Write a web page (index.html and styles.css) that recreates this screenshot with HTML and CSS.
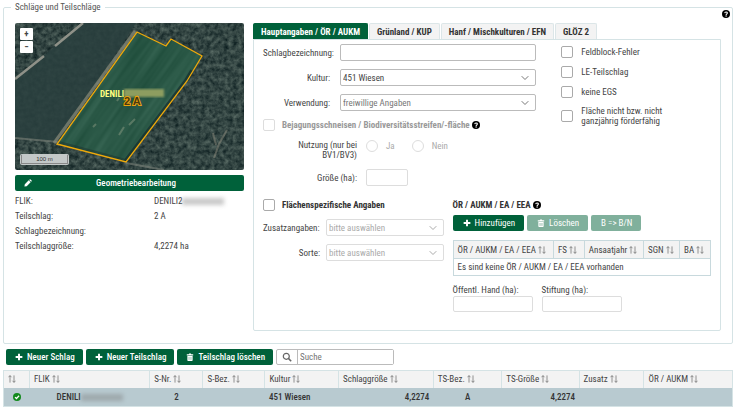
FILE: index.html
```
<!DOCTYPE html>
<html lang="de">
<head>
    <meta charset="UTF-8">
    <meta name="viewport" content="width=device-width, initial-scale=1">
    <title>Schläge und Teilschläge</title>
    <link rel="stylesheet" href="styles.css">
</head>
<body>

<!-- shared icons -->
<svg class="sprite" aria-hidden="true">
    <symbol id="plus" viewBox="0 0 10 10"><path d="M3.8 .8h2.4v3h3v2.4h-3v3H3.8v-3h-3V3.8h3z" fill="currentColor"/></symbol>
    <symbol id="trash" viewBox="0 0 10 10"><path d="M1 1.6h2.4l.5-1h2.2l.5 1H9V3H1zM1.7 3.6h6.6V9a.9.9 0 0 1-.9.9H2.6A.9.9 0 0 1 1.7 9z" fill="currentColor"/><path d="M3.8 5v3.6M6.2 5v3.6" stroke="#00613a" stroke-width=".5"/></symbol>
    <symbol id="pencil" viewBox="0 0 10 10"><path d="M.5 9.5L1 6.6l4.9-4.9 2.4 2.4-4.9 4.9zM6.5 1.1l.6-.6a.8.8 0 0 1 1.1 0l1.3 1.3a.8.8 0 0 1 0 1.1l-.6.6z" fill="currentColor"/></symbol>
    <symbol id="help" viewBox="0 0 10 10"><circle cx="5" cy="5" r="5" fill="#000"/><path d="M3.4 3.9C3.5 2.8 4.2 2.4 5 2.4c1 0 1.7.6 1.7 1.4 0 1.2-1.6 1.1-1.6 2.3" fill="none" stroke="#fff" stroke-width="1.3"/><circle cx="5.1" cy="7.6" r=".9" fill="#fff"/></symbol>
    <symbol id="sort" viewBox="0 0 10 10"><path d="M2.5 9.5V.8M.6 2.8L2.5.8l1.9 2M7.5.5v8.7M5.6 7.2l1.9 2 1.9-2" fill="none" stroke="#777" stroke-width="1"/></symbol>
    <symbol id="down" viewBox="0 0 10 10"><path d="M1.7 3.2L5 6.5l3.3-3.3" fill="none" stroke="currentColor" stroke-width="1"/></symbol>
    <symbol id="search" viewBox="0 0 10 10"><circle cx="4.3" cy="4.3" r="3" fill="none" stroke="#666" stroke-width="1.2"/><path d="M6.4 6.4l2.8 2.8" stroke="#666" stroke-width="1.5"/></symbol>
    <symbol id="check" viewBox="0 0 10 10"><circle cx="5" cy="5" r="5" fill="#128a1c"/><path d="M2.5 5.1l1.8 1.8 3.3-3.5" fill="none" stroke="#fff" stroke-width="1.5"/></symbol>
</svg>

<fieldset class="frame">
    <legend>Schläge und Teilschläge</legend>
    <svg class="icon frame-help"><use href="#help"/></svg>

    <div class="columns">
        <section class="left">
            <div class="map">
                <svg viewBox="0 0 229 147" preserveAspectRatio="xMidYMid slice">
                    <defs>
                        <filter id="trees" x="0" y="0" width="1" height="1" color-interpolation-filters="sRGB">
                            <feTurbulence type="fractalNoise" baseFrequency=".22" numOctaves="3" seed="8"/>
                            <feColorMatrix values=".38 0 0 0 .01  .38 0 0 0 .08  .34 0 0 0 .09  0 0 0 0 1"/>
                        </filter>
                        <filter id="crop" x="0" y="0" width="1" height="1" color-interpolation-filters="sRGB">
                            <feTurbulence type="fractalNoise" baseFrequency=".16 .01" numOctaves="2" seed="3"/>
                            <feColorMatrix values=".15 0 0 0 .09  .15 0 0 0 .27  .15 0 0 0 .2  0 0 0 0 1"/>
                        </filter>
                        <filter id="soft"><feGaussianBlur stdDeviation="1"/></filter>
                        <clipPath id="field"><path d="M122 9l29 14 5-7 31 17-15 25-61 81-69-18z"/></clipPath>
                    </defs>
                    <rect width="229" height="147" filter="url(#trees)"/>
                    <path d="M0 57L68 0h53L43 118 0 115z" fill="#2a403f" opacity=".88"/>
                    <path d="M0 56L29 33M40 23L68 0" stroke="#8f9188" stroke-width="2.5" fill="none"/>
                    <path d="M0 115l43 4M111 140l38 7" stroke="#7c837a" stroke-width="2" opacity=".6"/>
                    <path d="M212 107l-8 14-5 14M198 110l3 12" stroke="#8c8a7c" stroke-width="2" fill="none" opacity=".5"/>
                    <path d="M120 8L39 120" stroke="#8a8c7b" stroke-width="3" opacity=".7"/>
                    <g clip-path="url(#field)">
                        <rect x="-20" y="-80" width="270" height="320" filter="url(#crop)" transform="rotate(35 115 75)"/>
                        <path d="M178 48l-6 10-61 81" stroke="#142c2c" stroke-width="6" fill="none" opacity=".7"/>
                        <path d="M42 119l67 18" stroke="#1d3430" stroke-width="3" opacity=".5"/>
                        <path d="M104 112l5-8M114 102l6-6M102 78l2-3M78 104l3-3" stroke="#a1aa91" stroke-width="2" opacity=".4"/>
                    </g>
                    <path d="M122 9l29 14 5-7 31 17-15 25-61 81-69-18z" fill="none" stroke="#eea90b" stroke-width="1.3"/>
                    <text x="85" y="74" class="map-flik">DENILI</text>
                    <rect x="109" y="66" width="40" height="8" fill="#8d9d61" filter="url(#soft)"/>
                    <text x="109" y="82" class="map-part">2 A</text>
                </svg>
                <div class="zoom">
                    <button type="button" aria-label="Vergrößern">+</button>
                    <button type="button" aria-label="Verkleinern">−</button>
                </div>
                <div class="scale"><span>100 m</span></div>
            </div>
            <button type="button" class="btn geo"><svg class="icon"><use href="#pencil"/></svg><span>Geometriebearbeitung</span></button>
            <dl class="info">
                <dt>FLIK:</dt><dd>DENILI2<span class="hidden-no"></span></dd>
                <dt>Teilschlag:</dt><dd>2 A</dd>
                <dt>Schlagbezeichnung:</dt><dd></dd>
                <dt>Teilschlaggröße:</dt><dd>4,2274 ha</dd>
            </dl>
        </section>

        <section class="right">
            <nav class="tabs">
                <button type="button" class="active">Hauptangaben / ÖR / AUKM</button>
                <button type="button">Grünland / KUP</button>
                <button type="button">Hanf / Mischkulturen / EFN</button>
                <button type="button">GLÖZ 2</button>
            </nav>
            <div class="panel">
                <div class="upper">
                    <div class="main-data">
                        <div class="fields">
                            <label for="bez" class="wide">Schlagbezeichnung:</label>
                            <input type="text" id="bez">
                            <label for="kultur">Kultur:</label>
                            <div class="select"><select id="kultur"><option>451 Wiesen</option></select><svg class="icon"><use href="#down"/></svg></div>
                            <label for="verw">Verwendung:</label>
                            <div class="select grey"><select id="verw"><option>freiwillige Angaben</option></select><svg class="icon"><use href="#down"/></svg></div>
                        </div>
                        <div class="head-row off">
                            <label><input type="checkbox" disabled><span>Bejagungsschneisen / Biodiversitätsstreifen/-fläche</span></label>
                            <svg class="icon"><use href="#help"/></svg>
                        </div>
                        <div class="usage">
                            <span id="nutzung" class="caption">Nutzung (nur bei<br>BV1/BV3)</span>
                            <div class="radios" role="radiogroup" aria-labelledby="nutzung">
                                <label><input type="radio" name="nutzung" disabled>Ja</label>
                                <label><input type="radio" name="nutzung" disabled>Nein</label>
                            </div>
                            <label for="groesse" class="caption">Größe (ha):</label>
                            <input type="text" id="groesse" disabled>
                        </div>
                    </div>
                    <div class="flags">
                        <label><input type="checkbox"><span>Feldblock-Fehler</span></label>
                        <label><input type="checkbox"><span>LE-Teilschlag</span></label>
                        <label><input type="checkbox"><span>keine EGS</span></label>
                        <label><input type="checkbox"><span>Fläche nicht bzw. nicht<br>ganzjährig förderfähig</span></label>
                    </div>
                </div>

                <div class="lower">
                    <div class="specific">
                        <div class="head-row"><label><input type="checkbox"><span>Flächenspezifische Angaben</span></label></div>
                        <div class="fields">
                            <label for="zusatz" class="wide">Zusatzangaben:</label>
                            <div class="select off"><select id="zusatz" disabled><option>bitte auswählen</option></select><svg class="icon"><use href="#down"/></svg></div>
                            <label for="sorte">Sorte:</label>
                            <div class="select off"><select id="sorte" disabled><option>bitte auswählen</option></select><svg class="icon"><use href="#down"/></svg></div>
                        </div>
                    </div>
                    <div class="measures">
                        <h2>ÖR / AUKM / EA / EEA <svg class="icon"><use href="#help"/></svg></h2>
                        <div class="buttons">
                            <button type="button" class="btn"><svg class="icon"><use href="#plus"/></svg>Hinzufügen</button>
                            <button type="button" class="btn" disabled><svg class="icon"><use href="#trash"/></svg>Löschen</button>
                            <button type="button" class="btn" disabled>B =&gt; B/N</button>
                        </div>
                        <table class="small-table">
                            <colgroup><col class="m-name"><col class="m-fs"><col class="m-year"><col class="m-sgn"><col class="m-ba"></colgroup>
                            <thead><tr>
                                <th>ÖR / AUKM / EA / EEA <svg class="icon"><use href="#sort"/></svg></th>
                                <th>FS <svg class="icon"><use href="#sort"/></svg></th>
                                <th>Ansaatjahr <svg class="icon"><use href="#sort"/></svg></th>
                                <th>SGN <svg class="icon"><use href="#sort"/></svg></th>
                                <th>BA <svg class="icon"><use href="#sort"/></svg></th>
                            </tr></thead>
                            <tbody><tr><td colspan="5">Es sind keine ÖR / AUKM / EA / EEA vorhanden</td></tr></tbody>
                        </table>
                        <div class="areas">
                            <label>Öffentl. Hand (ha):<input type="text" disabled></label>
                            <label>Stiftung (ha):<input type="text" disabled></label>
                        </div>
                    </div>
                </div>
            </div>
        </section>
    </div>
</fieldset>

<div class="toolbar">
    <button type="button" class="btn"><svg class="icon"><use href="#plus"/></svg>Neuer Schlag</button>
    <button type="button" class="btn"><svg class="icon"><use href="#plus"/></svg>Neuer Teilschlag</button>
    <button type="button" class="btn"><svg class="icon"><use href="#trash"/></svg>Teilschlag löschen</button>
    <div class="search">
        <svg class="icon"><use href="#search"/></svg>
        <input type="text" placeholder="Suche" aria-label="Suche">
    </div>
</div>

<table class="list">
    <colgroup><col class="c-state"><col class="c-flik"><col class="c-nr"><col class="c-bez"><col class="c-kultur"><col class="c-size"><col class="c-tsbez"><col class="c-tssize"><col class="c-zusatz"><col class="c-oer"></colgroup>
    <thead><tr>
        <th><svg class="icon"><use href="#sort"/></svg></th>
        <th>FLIK <svg class="icon"><use href="#sort"/></svg></th>
        <th>S-Nr. <svg class="icon"><use href="#sort"/></svg></th>
        <th>S-Bez. <svg class="icon"><use href="#sort"/></svg></th>
        <th>Kultur <svg class="icon"><use href="#sort"/></svg></th>
        <th>Schlaggröße <svg class="icon"><use href="#sort"/></svg></th>
        <th>TS-Bez. <svg class="icon"><use href="#sort"/></svg></th>
        <th>TS-Größe <svg class="icon"><use href="#sort"/></svg></th>
        <th>Zusatz <svg class="icon"><use href="#sort"/></svg></th>
        <th>ÖR / AUKM <svg class="icon"><use href="#sort"/></svg></th>
    </tr></thead>
    <tbody><tr>
        <td class="mid"><svg class="icon"><use href="#check"/></svg></td>
        <td class="mid">DENILI<span class="hidden-no"></span></td>
        <td class="mid">2</td>
        <td></td>
        <td>451 Wiesen</td>
        <td class="num">4,2274</td>
        <td class="mid">A</td>
        <td class="num">4,2274</td>
        <td></td>
        <td></td>
    </tr></tbody>
</table>

</body>
</html>
```
FILE: styles.css
```
* {
    box-sizing: border-box;
}

body {
    margin: 0;
    padding: 1px 3px 0;
    background: #fff;
    color: #444;
    font: 9px/12px "Roboto Condensed", "Liberation Sans Narrow", Roboto, sans-serif;
}

button, input, select {
    font: inherit;
    color: inherit;
    margin: 0;
}

.sprite {
    position: absolute;
    width: 0;
    height: 0;
}

.icon {
    width: 8px;
    height: 8px;
    flex: none;
    vertical-align: -1px;
}

/* outer frame */
.frame {
    position: relative;
    min-width: 0;
    margin: 0;
    padding: 10px 11px 12px;
    border: 1px solid #d5e3e5;
    border-radius: 2px;
}

.frame legend {
    margin-left: -4px;
    padding: 0 4px;
    color: #555;
}

.frame-help {
    position: absolute;
    top: -3px;
    right: 2px;
}

.columns {
    display: grid;
    grid-template-columns: 23fr 47fr;
    gap: 9px;
}

/* map */
.map {
    position: relative;
    aspect-ratio: 229 / 147;
    overflow: hidden;
    border-radius: 2px;
}

.map > svg {
    display: block;
    width: 100%;
    height: 100%;
}

.map-flik {
    font-size: 9px;
    font-weight: bold;
    fill: #ffff80;
}

.map-part {
    font: bold 11px "Liberation Sans", sans-serif;
    fill: #4d3a10;
    stroke: #eea20b;
    stroke-width: 2px;
    paint-order: stroke;
}

.zoom {
    position: absolute;
    top: 5px;
    left: 5px;
    display: grid;
    gap: 1px;
}

.zoom button {
    width: 13px;
    height: 12px;
    padding: 0;
    border: 0;
    border-radius: 1px;
    background: #fff;
    font-weight: bold;
    line-height: 12px;
}

.scale {
    position: absolute;
    left: 5px;
    bottom: 5px;
    width: 49px;
    padding: 1px;
    border-radius: 2px;
    background: #c3c8c8;
    color: #333;
    font: 6px/8px "Liberation Sans", sans-serif;
    text-align: center;
}

.scale span {
    display: block;
    border: 1px solid #888;
    border-top: 0;
}

/* buttons */
.btn {
    display: flex;
    align-items: center;
    justify-content: center;
    gap: 4px;
    height: 16px;
    padding: 0 8px 0 9px;
    border: 0;
    border-radius: 2px;
    background: #00613a;
    color: #fff;
    font-weight: 500;
    white-space: nowrap;
}

.btn:disabled {
    background: #80b09c;
}

.geo {
    width: 100%;
    margin-top: 5px;
}

.geo span {
    flex: 1;
}

.info {
    display: grid;
    grid-template-columns: 139fr 90fr;
    grid-auto-rows: 15px;
    margin: 3px 0 0;
    line-height: 15px;
}

.info dd {
    margin: 0;
    white-space: nowrap;
}

.hidden-no {
    display: inline-block;
    width: 42px;
    height: 7px;
    vertical-align: -1px;
    background: #777;
    opacity: .4;
    filter: blur(2px);
}

/* tabs */
.tabs {
    display: flex;
    gap: 1px;
}

.tabs button {
    height: 16px;
    padding: 0 7px;
    border: 1px solid #dce6e8;
    border-bottom: 0;
    border-radius: 2px 2px 0 0;
    background: #f3f3f3;
    color: #333;
    font-weight: bold;
    white-space: nowrap;
}

.tabs .active {
    border-color: #00613a;
    background: #00613a;
    color: #fff;
}

.panel {
    min-height: 292px;
    padding: 4px 9px;
    border: 1px solid #d5e3e5;
    border-radius: 0 0 2px 2px;
}

.upper {
    display: grid;
    grid-template-columns: 274fr 150fr;
    gap: 25px;
}

.fields {
    display: grid;
    grid-template-columns: 67px 1fr;
    grid-auto-rows: 17px;
    gap: 8px 10px;
    align-items: center;
}

.fields label {
    text-align: right;
    white-space: nowrap;
}

.fields .wide {
    text-align: left;
}

input[type="text"], select {
    display: block;
    width: 100%;
    height: 17px;
    padding: 0 2px;
    border: 1px solid #bbb;
    border-radius: 2px;
    background: #fff;
}

input[type="text"]:disabled {
    border-color: #ddd;
}

.select {
    position: relative;
}

.select select {
    appearance: none;
    opacity: 1;
    padding-right: 18px;
}

.select .icon {
    position: absolute;
    top: 4px;
    right: 6px;
    width: 10px;
    height: 10px;
    color: #777;
    pointer-events: none;
}

.select.grey select {
    color: #777;
}

.select.off select {
    border-color: #ddd;
    color: #aaa;
}

.select.off .icon {
    color: #aaa;
}

input[type="checkbox"], input[type="radio"] {
    appearance: none;
    flex: none;
    width: 12px;
    height: 12px;
    border: 1px solid #aaa;
    border-radius: 2px;
    background: #fff;
}

input[type="radio"] {
    border-radius: 50%;
}

input[type="checkbox"]:disabled, input[type="radio"]:disabled {
    border-color: #ddd;
}

.flags {
    display: grid;
    gap: 8px;
    align-content: start;
    padding-top: 2px;
    line-height: 10px;
}

.flags label {
    display: flex;
    align-items: center;
    gap: 8px;
    min-height: 12px;
    white-space: nowrap;
}

.head-row {
    display: flex;
    align-items: center;
    gap: 2px;
    color: #333;
    font-weight: bold;
}

.head-row label {
    display: flex;
    align-items: center;
    gap: 7px;
    white-space: nowrap;
}

.head-row.off {
    margin-top: 8px;
    color: #999;
}

.usage {
    display: grid;
    grid-template-columns: 94px 1fr;
    gap: 9px;
    margin-top: 9px;
    line-height: 10px;
}

.caption {
    text-align: right;
    align-self: center;
}

.radios {
    display: flex;
    gap: 17px;
    color: #aaa;
}

.radios label {
    display: flex;
    align-items: center;
    gap: 8px;
    height: 12px;
}

.usage input[type="text"] {
    width: 42px;
}

/* lower half */
.lower {
    display: grid;
    grid-template-columns: 181fr 259fr;
    gap: 9px;
    margin-top: 13px;
}

.specific .fields {
    grid-template-columns: 57px 1fr;
    gap: 8px 6px;
    margin-top: 8px;
}

.measures h2 {
    margin: 0 0 4px;
    color: #333;
    font: inherit;
    font-weight: bold;
}

.buttons {
    display: flex;
    gap: 3px;
}

.buttons .btn {
    padding: 0 9px 0 10px;
    font-weight: normal;
}

table {
    width: 100%;
    border-collapse: collapse;
    table-layout: fixed;
}

th, td {
    padding: 0 4px;
    text-align: left;
    white-space: nowrap;
}

th {
    background: #f3f3f3;
    font-weight: normal;
}

.small-table {
    margin: 9px 0 8px;
    border: 1px solid #c8d9dd;
}

.small-table th {
    height: 18px;
    border: 1px solid #c8d9dd;
}

.small-table td {
    height: 17px;
}

.m-name { width: 39%; }
.m-fs { width: 12%; }
.m-year { width: 23%; }
.m-sgn { width: 14%; }
.m-ba { width: 12%; }

.areas {
    display: flex;
    gap: 9px;
}

.areas label {
    width: 80px;
}

.areas input[type="text"] {
    height: 16px;
}

/* toolbar and list */
.toolbar {
    display: flex;
    gap: 3px;
    margin: 5px 3px;
}

.search {
    display: flex;
    align-items: center;
    width: 118px;
    height: 16px;
    border: 1px solid #bbb;
    border-radius: 2px;
}

.search .icon {
    width: 10px;
    height: 10px;
    margin: 0 5px;
}

.search input[type="text"] {
    height: 100%;
    border: 0;
    border-left: 1px solid #bbb;
    border-radius: 0;
}

.list {
    border: 1px solid #d5e3e5;
}

.list th {
    height: 17px;
    border-right: 1px solid #d5e3e5;
}

.list td {
    height: 19px;
    background: #b8cad0;
    color: #333;
    font-weight: 500;
}

.list .mid {
    text-align: center;
}

.list .num {
    text-align: right;
}

.c-state { width: 26px; }
.c-flik { width: 16.5%; }
.c-nr { width: 7.3%; }
.c-bez { width: 8.5%; }
.c-kultur { width: 10.1%; }
.c-size { width: 13%; }
.c-tsbez { width: 9.4%; }
.c-tssize { width: 10.6%; }
.c-zusatz { width: 8.9%; }
```
